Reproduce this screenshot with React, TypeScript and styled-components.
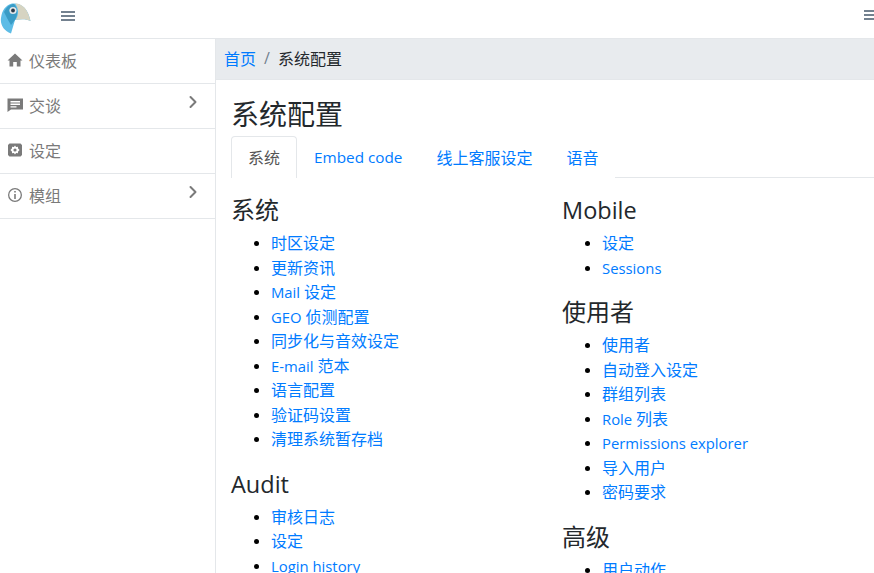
import React from 'react';
import styled, { createGlobalStyle } from 'styled-components';
import { ChevronRight } from 'lucide-react';

const colors = {
  link: '#007bff',
  text: '#23282c',
  muted: '#73818f',
  nav: '#7a7a7a',
  border: '#e4e7ea',
  crumb: '#e8ebee',
};

const GlobalStyle = createGlobalStyle`
  html, body {
    margin: 0;
    height: 100%;
    overflow: hidden;
    background: #fff;
  }
  body {
    font-family: "Open Sans", "Noto Sans CJK SC", sans-serif;
    font-size: 16px;
    color: ${colors.text};
  }
`;

const Page = styled.div`
  width: 874px;
  height: 573px;
  overflow: hidden;
  display: flex;
  flex-direction: column;
`;

const Header = styled.header`
  height: 38px;
  flex: none;
  display: flex;
  align-items: flex-start;
  justify-content: space-between;
  border-bottom: 1px solid ${colors.border};
`;

const Brand = styled.div`
  display: flex;
  align-items: flex-start;
  gap: 29px;
  padding-top: 3px;
`;

const Burger = styled.span`
  display: block;
  box-sizing: border-box;
  width: 14px;
  height: 10px;
  margin-top: 8px;
  border-top: 2px solid ${colors.muted};
  border-bottom: 2px solid ${colors.muted};
  position: relative;
  &::after {
    content: '';
    position: absolute;
    left: 0;
    right: 0;
    top: 2px;
    height: 2px;
    background: ${colors.muted};
  }
`;

const RightBurger = styled(Burger)`
  width: 10px;
  margin-top: 10px;
`;

const Body = styled.div`
  flex: 1;
  display: flex;
  min-height: 0;
`;

const Sidebar = styled.nav`
  width: 215px;
  flex: none;
  border-right: 1px solid ${colors.border};
`;

const NavItem = styled.div`
  height: 42px;
  display: flex;
  align-items: center;
  padding: 0 0 2px 7px;
  gap: 6px;
  position: relative;
  color: ${colors.nav};
  font-size: 16px;
  border-bottom: 1px solid ${colors.border};
`;

const NavIcon = styled.svg`
  width: 16px;
  height: 16px;
  flex: none;
  fill: ${colors.nav};
`;

const Caret = styled(ChevronRight)`
  position: absolute;
  right: 12px;
  top: 8px;
  width: 20px;
  height: 20px;
  color: ${colors.nav};
`;

const Main = styled.main`
  flex: 1;
  min-width: 0;
`;

const Breadcrumb = styled.div`
  height: 41px;
  padding: 0 0 2px 8px;
  box-sizing: border-box;
  background: ${colors.crumb};
  border-bottom: 1px solid ${colors.border};
  display: flex;
  align-items: center;
`;

const CrumbLink = styled.a`
  color: ${colors.link};
`;

const Sep = styled.span`
  color: ${colors.muted};
  margin: 0 8px;
`;

const Content = styled.div`
  padding: 13px 0 0 15px;
`;

const Title = styled.h1`
  margin: 0 0 1px;
  font-size: 28px;
  font-weight: 400;
  line-height: 42px;
`;

const Tabs = styled.div`
  display: flex;
  height: 41px;
  border-bottom: 1px solid ${colors.border};
`;

const Tab = styled.a<{ $active?: boolean }>`
  box-sizing: border-box;
  height: 42px;
  padding: 0 16px 1px;
  display: flex;
  align-items: center;
  color: ${(p) => (p.$active ? '#555' : colors.link)};
  background: #fff;
  border: 1px solid ${(p) => (p.$active ? colors.border : 'transparent')};
  border-bottom: 0;
  border-radius: 4px 4px 0 0;
`;

const TabLatin = styled.span`
  font-size: 15.3px;
`;

const Latin = styled.span`
  font-size: 14.85px;
`;

const Columns = styled.div`
  display: grid;
  grid-template-columns: 331px 312px;
  padding-top: 16px;
`;

const Section = styled.section`
  margin-bottom: 16px;
`;

const SectionTitle = styled.h4`
  margin: 0;
  font-size: 24px;
  font-weight: 400;
  line-height: 32px;
`;

const LatinTitle = styled.span`
  font-size: 23.5px;
`;

const LinkList = styled.ul`
  margin: 5px 0 0;
  padding-left: 40px;
`;

const LinkItem = styled.li`
  height: 24.5px;
  line-height: 24.5px;
  color: #000;
  &::marker {
    font-size: 14px;
  }
  a {
    color: ${colors.link};
  }
`;

const left = [
  { title: '系统', links: ['时区设定', '更新资讯', 'Mail 设定', 'GEO 侦测配置', '同步化与音效设定', 'E-mail 范本', '语言配置', '验证码设置', '清理系统暂存档'] },
  { title: 'Audit', links: ['审核日志', '设定', 'Login history'] },
];

const right = [
  { title: 'Mobile', links: ['设定', 'Sessions'] },
  { title: '使用者', links: ['使用者', '自动登入设定', '群组列表', 'Role 列表', 'Permissions explorer', '导入用户', '密码要求'] },
  { title: '高级', links: ['用户动作'] },
];

// the Latin runs sit a bit smaller next to the CJK ones
const mixed = (text: string) =>
  text.split(/([A-Za-z][A-Za-z\- ]*)/).map((part, i) =>
    i % 2 ? <Latin key={i}>{part}</Latin> : part,
  );

const Logo = () => (
  <svg width="32" height="31" viewBox="0 0 32 31">
    <path d="M12 0.5 C21 -0.5 28 5 30.5 18 C26 15.5 20 16 15 17 L11 30.5 C4 28 0 22 1 15 C2 7 6 2 12 0.5Z" fill="#5dbce6" />
    <path d="M4 9 C7 3 11 1 14 1 C18 5 18 12 15 17 L11 22 C8 17 6 13 4 9Z" fill="#3a9cc6" />
    <path d="M15 0.6 C23 0.5 28 7 30.5 18 C26 15.5 20 16 15.5 17 C19 12 19 6 15 0.6Z" fill="#d6d4c2" />
    <circle cx="13" cy="7.5" r="3.6" fill="#e4e7ea" />
    <circle cx="13" cy="7.5" r="1.9" fill="#2b3a48" />
  </svg>
);

const Sections = ({ data }: { data: typeof left }) => (
  <div>
    {data.map((s) => (
      <Section key={s.title}>
        <SectionTitle>
          {/^[A-Za-z]/.test(s.title) ? <LatinTitle>{s.title}</LatinTitle> : s.title}
        </SectionTitle>
        <LinkList>
          {s.links.map((l) => (
            <LinkItem key={l}>
              <a>{mixed(l)}</a>
            </LinkItem>
          ))}
        </LinkList>
      </Section>
    ))}
  </div>
);

export default function App() {
  return (
    <Page>
      <GlobalStyle />
      <Header>
        <Brand>
          <Logo />
          <Burger />
        </Brand>
        <RightBurger />
      </Header>
      <Body>
        <Sidebar>
          <NavItem>
            <NavIcon viewBox="0 0 16 16">
              <path d="M8 1.5 L15.5 8.5 H13.5 V14.5 H9.8 V10 H6.2 V14.5 H2.5 V8.5 H.5Z" />
            </NavIcon>
            仪表板
          </NavItem>
          <NavItem>
            <NavIcon viewBox="0 0 16 16">
              <path fillRule="evenodd" d="M.5 1.5 H16 V12.5 H4 L.5 15Z M3.5 4 V5.4 H13 V4Z M3.5 6.6 V8 H13 V6.6Z M3.5 9.2 V10.5 H9.5 V9.2Z" />
            </NavIcon>
            交谈
            <Caret strokeWidth={2.4} />
          </NavItem>
          <NavItem>
            <NavIcon viewBox="0 0 16 16">
              <path fillRule="evenodd" d="M2.5 1.5 H13.5 L15 3 V13 L13.5 14.5 H2.5 L1 13 V3Z M8 3.6 L9.1 5 L10.9 4.8 L11.1 6.6 L12.6 8 L11.1 9.4 L10.9 11.2 L9.1 11 L8 12.4 L6.9 11 L5.1 11.2 L4.9 9.4 L3.4 8 L4.9 6.6 L5.1 4.8 L6.9 5Z M8 6.4 A1.6 1.6 0 1 0 8 9.6 A1.6 1.6 0 1 0 8 6.4Z" />
            </NavIcon>
            设定
          </NavItem>
          <NavItem>
            <NavIcon viewBox="0 0 16 16">
              <path fillRule="evenodd" d="M8 1 A7 7 0 1 0 8 15 A7 7 0 1 0 8 1Z M8 2.3 A5.7 5.7 0 1 1 8 13.7 A5.7 5.7 0 1 1 8 2.3Z M7.2 4 H8.8 V5.6 H7.2Z M7.2 7 H8.8 V12 H7.2Z" />
            </NavIcon>
            模组
            <Caret strokeWidth={2.4} />
          </NavItem>
        </Sidebar>
        <Main>
          <Breadcrumb>
            <CrumbLink>首页</CrumbLink>
            <Sep>/</Sep>
            系统配置
          </Breadcrumb>
          <Content>
            <Title>系统配置</Title>
            <Tabs>
              <Tab $active>系统</Tab>
              <Tab>
                <TabLatin>Embed code</TabLatin>
              </Tab>
              <Tab>线上客服设定</Tab>
              <Tab>语音</Tab>
            </Tabs>
            <Columns>
              <Sections data={left} />
              <Sections data={right} />
            </Columns>
          </Content>
        </Main>
      </Body>
    </Page>
  );
}
